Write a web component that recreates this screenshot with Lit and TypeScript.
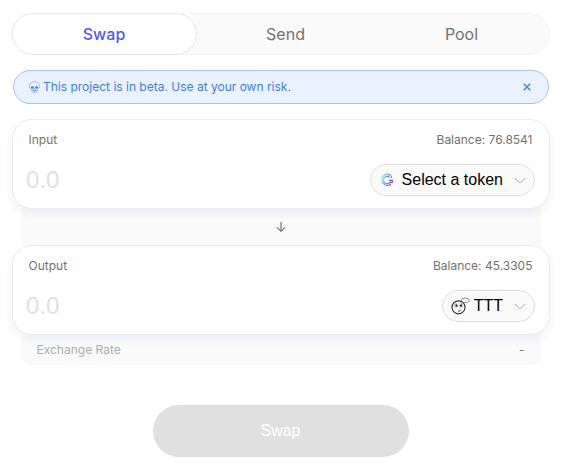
import { LitElement, html, css } from "lit";
import { customElement, property } from "lit/decorators.js";

const skullIcon = html`<svg width="11" height="12" viewBox="0 0 11 12" fill="none" stroke="currentColor">
  <path d="M2.400 8.300C1.200 7.600.6 6.400.6 4.900.6 2.200 2.700.7 5.500.7s4.900 1.500 4.900 4.200c0 1.500-.6 2.700-1.800 3.400l-.3 1.700c-.2 1-1.200 1.400-2.800 1.400s-2.600-.4-2.800-1.400z" stroke-width=".75" opacity=".6"/>
  <ellipse cx="3.400" cy="6.500" rx="1.500" ry="1.200" fill="currentColor" stroke="none"/>
  <ellipse cx="7.600" cy="6.500" rx="1.500" ry="1.200" fill="currentColor" stroke="none"/>
  <path d="M5.500 7.500v1.200M3.600 9.600h3.800" stroke-width=".9"/>
</svg>`;

const closeIcon = html`<svg width="8" height="8" viewBox="0 0 8 8" fill="none" stroke="currentColor" stroke-width="1.300">
  <path d="M.8.8l6.400 6.400M7.200.8L.8 7.200"/>
</svg>`;

const chevronIcon = html`<svg width="12" height="7" viewBox="0 0 12 7" fill="none" stroke="#aeaeae">
  <path d="M.8.8L6 5.900 11.200.8"/>
</svg>`;

const arrowIcon = html`<svg width="10" height="10" viewBox="0 0 10 10" fill="none" stroke="#737373" stroke-width="1.200">
  <path d="M5 0v9.200M1 5.300l4 4 4-4"/>
</svg>`;

const coinIcon = html`<svg width="14" height="14" viewBox="0 0 14 14" fill="none">
  <defs>
    <linearGradient id="ring" gradientUnits="userSpaceOnUse" x1="1" y1="5" x2="13" y2="8">
      <stop offset="0" stop-color="#7af3ff"/>
      <stop offset=".5" stop-color="#5b8cf2"/>
      <stop offset="1" stop-color="#a01fdc"/>
    </linearGradient>
  </defs>
  <path d="M10.200 1.900A5.600 5.600 0 1 0 10.800 11.200" stroke="url(#ring)" stroke-width="1.100"/>
  <path d="M9.600 4.300A3.700 3.700 0 1 0 10 9.400L12.300 9.200V7.400H8.800" stroke="url(#ring)" stroke-width="1.100"/>
  <path d="M10 2l2 1.800-1.600 1" stroke="#7551e8" stroke-width=".9"/>
</svg>`;

const faceIcon = html`<svg width="19" height="18" viewBox="0 0 19 18" fill="none" stroke="#333">
  <circle cx="7.500" cy="10.300" r="6.500" stroke-width="1.150"/>
  <ellipse cx="14.300" cy="3.300" rx="4" ry="2.300" stroke="#777" stroke-width=".8"/>
  <path d="M11.500 5.300l-.8 1" stroke="#777" stroke-width=".7"/>
  <path d="M3.200 7.300q1.500-1 3 0M8.500 7.200q1.500-1 3 0" stroke="#777" stroke-width=".7"/>
  <ellipse cx="5" cy="9" rx="1.800" ry="1.300" stroke="#999" stroke-width=".5"/>
  <ellipse cx="10" cy="9" rx="1.800" ry="1.300" stroke="#999" stroke-width=".5"/>
  <circle cx="5.500" cy="8.700" r="1.100" fill="#222" stroke="none"/>
  <circle cx="10" cy="8.700" r="1.100" fill="#222" stroke="none"/>
  <path d="M7 14.300q2-.1 3-1.500" stroke-width=".9"/>
</svg>`;

@customElement("currency-panel")
export class CurrencyPanel extends LitElement {
  @property() label = "";
  @property() balance = "";
  @property() token = "";
  @property() kind = "coin";

  static styles = css`
    :host {
      display: block;
      position: relative;
      box-sizing: border-box;
      height: 90px;
      border: 1px solid #ececec;
      border-radius: 20px;
      background: #fff;
      box-shadow: 0 4px 8px rgba(47, 47, 230, 0.08);
    }
    .labels {
      display: flex;
      justify-content: space-between;
      padding: 12px 16.500px 0 15.500px;
      font: 12px/16px Inter, sans-serif;
      color: #737373;
    }
    .row {
      display: flex;
      align-items: center;
      justify-content: space-between;
      padding: 16px 14px 0 13px;
    }
    .amount {
      font: 24px/32px "Liberation Sans", sans-serif;
      color: #e1e1e1;
    }
    .token {
      display: flex;
      align-items: center;
      box-sizing: border-box;
      height: 32px;
      padding: 0 8px 0 9px;
      border: 1px solid #dfdfdf;
      border-radius: 16px;
      background: #fafafa;
      color: #000;
      font: 16px/30px "Liberation Sans", sans-serif;
    }
    .name {
      margin: 0 11px 0 8px;
    }
    .face .name {
      margin-left: 4px;
    }
    .face {
      padding-left: 8px;
    }
    svg {
      display: block;
    }
  `;

  render() {
    const face = this.kind === "face";
    return html`
      <div class="labels"><span>${this.label}</span><span>Balance: ${this.balance}</span></div>
      <div class="row">
        <span class="amount">0.0</span>
        <div class="token ${face ? "face" : "coin"}">
          ${face ? faceIcon : coinIcon}<span class="name">${this.token}</span>${chevronIcon}
        </div>
      </div>
    `;
  }
}

@customElement("app-root")
export class AppRoot extends LitElement {
  static styles = css`
    :host {
      display: block;
      box-sizing: border-box;
      height: 465px;
      padding: 13px 16px 0 12px;
      background: #fff;
      font-family: Inter, sans-serif;
      color: #737373;
    }
    svg {
      display: block;
    }
    .tabs {
      display: flex;
      box-sizing: border-box;
      height: 42px;
      border: 1px solid #f4f4f4;
      border-radius: 21px;
      background: #fafafa;
      font-size: 16px;
      line-height: 40px;
      text-align: center;
    }
    .tab {
      flex: 1;
      padding-left: 1px;
    }
    .tab.active {
      flex: none;
      box-sizing: border-box;
      width: 185px;
      height: 42px;
      margin: -1px 0 0 -1px;
      padding: 0 1px 0 0;
      border: 1px solid #e7e7e7;
      border-radius: 21px;
      background: #fff;
      color: #5555f6;
      font-weight: 500;
    }
    .notice {
      display: flex;
      align-items: center;
      box-sizing: border-box;
      height: 34px;
      margin: 15px 1px 0;
      padding: 0 17.500px 0 15px;
      border: 1px solid #a6c3fb;
      border-radius: 17px;
      background: #eaf1ff;
      color: #437ff4;
      font-size: 12px;
      line-height: 16px;
    }
    .notice .message {
      flex: 1;
      margin-left: 3px;
    }
    .exchange {
      margin-top: 15px;
    }
    .between,
    .rate {
      margin: 0 9px;
      background: #fafafa;
    }
    .between {
      display: flex;
      align-items: center;
      justify-content: center;
      height: 36px;
    }
    .rate {
      display: flex;
      justify-content: space-between;
      box-sizing: border-box;
      height: 30px;
      padding: 7px 16.500px 0 15.500px;
      border-radius: 0 0 10px 10px;
      font-size: 12px;
      line-height: 16px;
    }
    .rate .caption {
      color: #aeaeae;
    }
    .submit {
      display: flex;
      align-items: center;
      justify-content: center;
      box-sizing: border-box;
      width: 256px;
      height: 52px;
      margin: 40px auto 0;
      padding-right: 1px;
      border-radius: 26px;
      background: #e0e0e0;
      color: #fff;
      font: 16px "Liberation Sans", sans-serif;
    }
  `;

  render() {
    return html`
      <div class="tabs">
        <div class="tab active">Swap</div>
        <div class="tab">Send</div>
        <div class="tab">Pool</div>
      </div>
      <div class="notice">${skullIcon}<span class="message">This project is in beta. Use at your own risk.</span>${closeIcon}</div>
      <div class="exchange">
        <currency-panel label="Input" balance="76.8541" token="Select a token"></currency-panel>
        <div class="between">${arrowIcon}</div>
        <currency-panel label="Output" balance="45.3305" token="TTT" kind="face"></currency-panel>
        <div class="rate"><span class="caption">Exchange Rate</span><span>-</span></div>
      </div>
      <div class="submit">Swap</div>
    `;
  }
}
